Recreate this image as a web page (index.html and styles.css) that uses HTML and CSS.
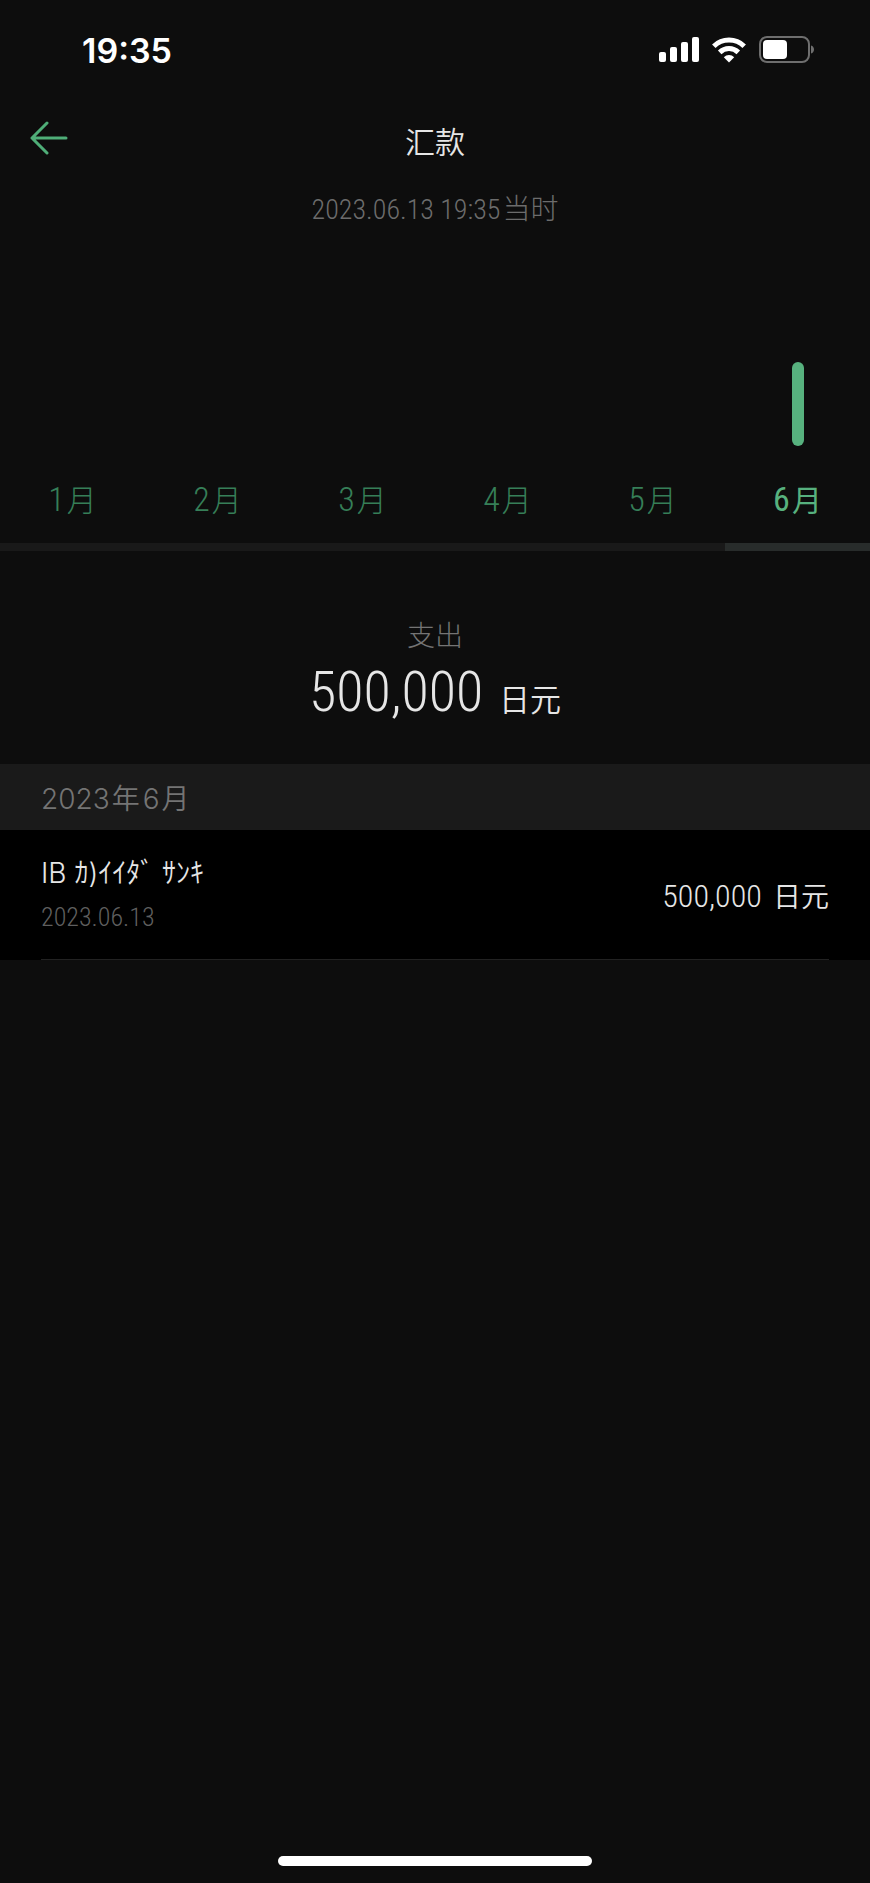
FILE: index.html
```html
<!DOCTYPE html>
<html lang="zh-CN">
<head>
    <meta charset="UTF-8">
    <meta name="viewport" content="width=device-width, initial-scale=1.0">
    <title>汇款</title>
    <link rel="stylesheet" href="styles.css">
</head>
<body>
    <!-- Status Bar -->
    <div class="status-bar">
        <span class="clock">19:35</span>
        <div class="status-icons">
            <svg width="40" height="26" viewBox="0 0 40 26" fill="#fff">
                <rect x="0" y="15" width="7" height="10" rx="2"/>
                <rect x="11" y="10" width="7" height="15" rx="2"/>
                <rect x="22" y="5" width="7" height="20" rx="2"/>
                <rect x="33" y="0" width="7" height="25" rx="2"/>
            </svg>
            <svg width="34" height="26" viewBox="0 0 34 26" fill="none" stroke="#fff" stroke-width="5">
                <path d="M1.8 9.2a21.8 21.8 0 0 1 30.4 0"/>
                <path d="M7.7 15.4a13.3 13.3 0 0 1 18.6 0"/>
                <path d="M17 25.4l-5.2-5.2a7.5 7.5 0 0 1 10.4 0z" fill="#fff" stroke="none"/>
            </svg>
            <svg width="55" height="28" viewBox="0 0 55 28">
                <rect x="1" y="1" width="49" height="25" rx="7" fill="none" stroke="#6e6e6e" stroke-width="2"/>
                <rect x="4" y="4" width="24" height="19" rx="4" fill="#fff"/>
                <path d="M52 9.500c4 1 4 7 0 8z" fill="#6e6e6e"/>
            </svg>
        </div>
    </div>

    <header class="header">
        <button class="back" aria-label="返回">
            <svg width="38" height="34" viewBox="0 0 38 34" fill="none" stroke="#4fae78" stroke-width="3" stroke-linecap="round" stroke-linejoin="round">
                <path d="M17 2L2 17l15 15M2 17h34"/>
            </svg>
        </button>
        <h1>汇款</h1>
    </header>
    <p class="as-of">2023.06.13 19:35<span class="suffix">当时</span></p>

    <!-- Monthly Chart -->
    <nav class="months">
        <button class="month"><span class="track"></span>1<span class="unit">月</span></button>
        <button class="month"><span class="track"></span>2<span class="unit">月</span></button>
        <button class="month"><span class="track"></span>3<span class="unit">月</span></button>
        <button class="month"><span class="track"></span>4<span class="unit">月</span></button>
        <button class="month"><span class="track"></span>5<span class="unit">月</span></button>
        <button class="month active"><span class="track"><span class="bar"></span></span>6<span class="unit">月</span></button>
    </nav>

    <section class="summary">
        <h2>支出</h2>
        <p class="total">500,000 <span class="yen">日元</span></p>
    </section>

    <!-- Transactions -->
    <section>
        <h3 class="group-title">2023<span class="year">年</span>6<span class="mon">月</span></h3>
        <ul class="list">
            <li class="item">
                <div>
                    <p class="name">IB <span lang="ja">ｶ)ｲｲﾀﾞ ｻﾝｷ</span></p>
                    <p class="date">2023.06.13</p>
                </div>
                <p class="amount">500,000 <span class="yen">日元</span></p>
            </li>
        </ul>
    </section>

    <div class="home-indicator"></div>
</body>
</html>
```
FILE: styles.css
```css
* {
    box-sizing: border-box;
}

body {
    margin: 0;
    min-height: 100vh;
    display: flex;
    flex-direction: column;
    background-color: #0d0d0d;
    color: #e6e6e6;
    font-family: "Roboto Condensed", Roboto, "Noto Sans CJK SC", sans-serif;
    font-weight: 300;
}

h1, h2, h3, p, ul {
    margin: 0;
    padding: 0;
    font-weight: 300;
}

button {
    border: 0;
    padding: 0;
    background: none;
    font: inherit;
    cursor: pointer;
}

svg {
    display: block;
}

/* Status Bar */
.status-bar {
    display: flex;
    justify-content: space-between;
    align-items: center;
    height: 100px;
    padding: 0 56px 0 82px;
}

.clock {
    font-family: Inter, sans-serif;
    font-size: 34px;
    font-weight: 600;
    color: #fff;
}

.status-icons {
    display: flex;
    align-items: center;
    gap: 13px;
}

/* Header */
.header {
    display: grid;
    grid-template-columns: 40px 1fr 40px;
    align-items: center;
    height: 80px;
    padding: 0 30px;
}

.back {
    margin-bottom: 4px;
}

.header h1 {
    font-size: 30px;
    font-weight: 350;
    text-align: center;
}

.as-of {
    height: 60px;
    line-height: 60px;
    font-size: 28px;
    text-align: center;
    color: #6c6c6c;
}

.suffix {
    margin-left: 2px;
}

/* Monthly Chart */
.months {
    display: grid;
    grid-template-columns: repeat(6, 1fr);
    margin-top: 66px;
}

.month {
    height: 245px;
    padding-bottom: 18px;
    border-bottom: 8px solid #191919;
    color: #367f58;
    font-size: 34px;
    line-height: 50px;
}

.month .unit {
    margin-left: 2px;
    font-size: 30px;
}

.track {
    display: flex;
    justify-content: center;
    align-items: flex-end;
    height: 140px;
    margin-bottom: 28px;
}

.bar {
    width: 12px;
    height: 84px;
    border-radius: 6px;
    background-color: #57b17e;
}

.month.active {
    border-color: #282c2b;
    color: #57b17e;
    font-weight: 400;
}

/* Summary */
.summary {
    height: 213px;
    padding-top: 66px;
    text-align: center;
}

.summary h2 {
    font-size: 28px;
    line-height: 40px;
    color: #747474;
}

.total {
    font-size: 56px;
    line-height: 70px;
}

.yen {
    font-weight: 350;
}

.total .yen {
    margin-left: 3px;
    font-size: 31px;
}

/* Transactions */
.group-title {
    height: 66px;
    padding: 0 41px;
    background-color: #1a1a1a;
    color: #747474;
    font-family: Inter, "Noto Sans CJK SC", sans-serif;
    font-size: 28px;
    font-weight: 350;
    line-height: 70px;
}

.year {
    margin: 0 3px 0 2px;
}

.mon {
    margin-left: 2px;
}

.list {
    list-style: none;
    padding: 0 41px;
    background-color: #000;
}

.item {
    display: flex;
    justify-content: space-between;
    align-items: center;
    height: 130px;
    border-bottom: 1px solid #222;
}

.name {
    font-family: Inter, "Noto Sans CJK JP", sans-serif;
    font-size: 28px;
    font-weight: 350;
    line-height: 44px;
}

.date {
    font-size: 26px;
    line-height: 44px;
    color: #5f5f5f;
}

.amount {
    font-size: 32px;
}

.amount .yen {
    margin-left: 4px;
    font-size: 28px;
}

/* Home Indicator */
.home-indicator {
    width: 36%;
    height: 10px;
    margin: auto auto 17px;
    border-radius: 5px;
    background-color: #fff;
}
```
